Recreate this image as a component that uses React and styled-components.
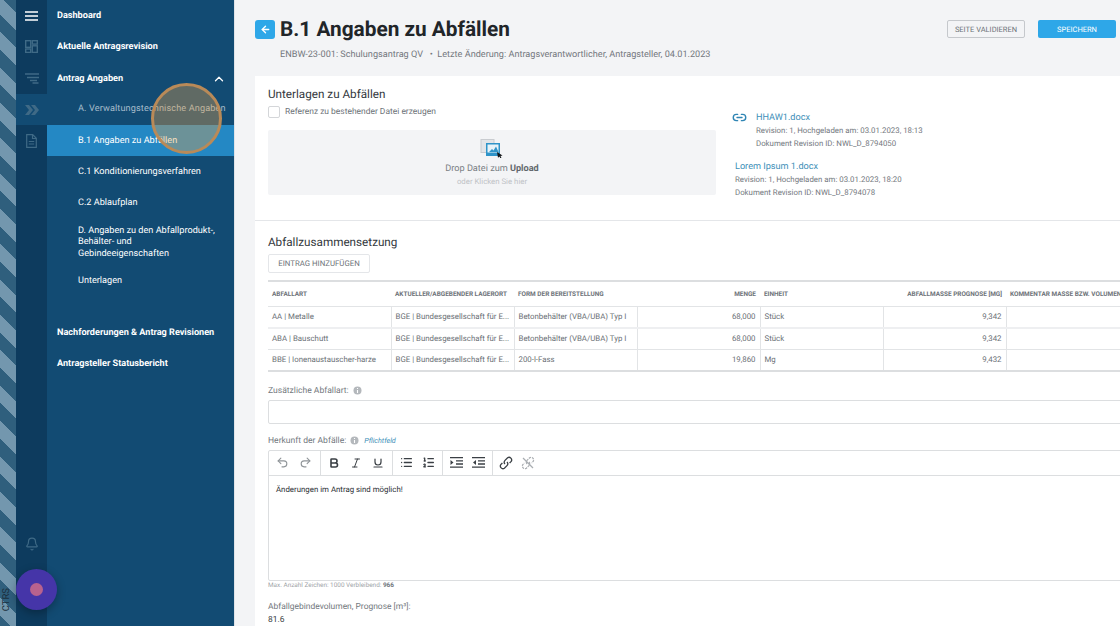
import React from 'react';
import styled, { createGlobalStyle } from 'styled-components';
import { Bell, ChevronUp, ArrowLeft, Link2, Undo2, Redo2, Bold, Italic, Underline, List, ListOrdered } from 'lucide-react';

const Global = createGlobalStyle`
  html, body { margin: 0; padding: 0; height: 100%; overflow: hidden; }
  body { font-family: Roboto, "Liberation Sans", sans-serif; background: #f3f4f6; text-rendering: geometricPrecision; }
  * { box-sizing: border-box; }
`;
const Page = styled.div`display:flex;width:1120px;height:626px;overflow:hidden;position:relative;`;
const Stripes = styled.div`
  width:16px;flex:none;position:relative;
  background: repeating-linear-gradient(45deg,#2f5f7d 0 7.7px,#7397ae 7.7px 20.2px,#2f5f7d 20.2px 25px);
`;
const CtrsLabel = styled.span`
  position:absolute;left:1px;bottom:15px;writing-mode:vertical-rl;transform:rotate(180deg);
  font-size:9.5px;line-height:12px;color:#1c2f3d;
`;
const Rail = styled.nav`width:31px;flex:none;background:#0d3b5e;display:flex;flex-direction:column;`;
const RailCell = styled.div`
  height:${p=>p.$h||31.3}px;display:flex;align-items:center;justify-content:center;flex:none;
  color:${p=>p.$bright?'#fff':'#3f6a86'};
  background:${p=>p.$current?'#124b73':'transparent'};
`;
const RailSpacer = styled.div`flex:1;`;
const Sidebar = styled.nav`width:188px;flex:none;background:#124b73;border-right:1px solid #dfe3e8;display:flex;flex-direction:column;`;
const NavHead = styled.div`
  min-height:31.3px;padding:1px 8px 0 10px;display:flex;align-items:center;justify-content:space-between;
  color:#fff;font-size:9.14px;font-weight:700;line-height:12px;white-space:nowrap;
  margin-top:${p=>p.$gap||0}px;
`;
const NavSub = styled.div`
  min-height:${p=>p.$multi?47:31.3}px;padding:1px 6px 0 31px;display:flex;align-items:center;
  font-size:9.14px;line-height:11.5px;white-space:nowrap;
  letter-spacing:${p=>p.$dim?'.12px':'0'};
  color:${p=>p.$dim?'#a7bdcb':'#fff'};
  background:${p=>p.$active?'#2488c4':'transparent'};
`;
const Highlight = styled.div`
  position:absolute;left:151px;top:83px;width:71px;height:71px;border-radius:50%;
  background:rgba(243,166,71,.35);border:3px solid #b98a58;
`;
const Fab = styled.div`
  position:absolute;left:16px;top:569px;width:41px;height:41px;border-radius:50%;background:#4535a8;
  box-shadow:0 3px 10px rgba(0,0,0,.3);display:flex;align-items:center;justify-content:center;
`;
const FabDot = styled.span`width:13px;height:13px;border-radius:50%;background:#b8628e;`;
const Main = styled.main`flex:1;min-width:0;padding:0 0 0 20px;display:flex;flex-direction:column;`;
const Header = styled.header`height:76px;flex:none;display:flex;flex-direction:column;padding-top:18px;`;
const TitleRow = styled.div`display:flex;align-items:center;height:22px;`;
const BackBtn = styled.div`
  width:20px;height:19px;border-radius:3px;background:#2ea7e8;color:#fff;display:flex;align-items:center;justify-content:center;flex:none;margin-right:5px;
`;
const Title = styled.h1`margin:0;padding-top:1px;font-size:20.8px;line-height:22px;font-weight:700;color:#212529;white-space:nowrap;`;
const Actions = styled.div`margin-left:auto;display:flex;gap:13px;align-items:center;`;
const Ghost = styled.div`
  width:78px;height:18px;border:1px solid #c5c8cc;border-radius:2px;color:#6c7278;font-size:7.5px;
  display:flex;align-items:center;justify-content:center;
`;
const Primary = styled.div`
  width:78px;height:18px;margin-right:4px;background:#2ea7e8;border-radius:2px;color:#fff;font-size:7.5px;display:flex;align-items:center;justify-content:center;
`;
const SubLine = styled.div`margin:7.5px 0 0 25px;font-size:9.14px;line-height:14px;color:#73787e;white-space:pre;`;
const Card = styled.div`background:#fff;flex:1;min-width:0;display:flex;flex-direction:column;overflow:hidden;`;
const Upper = styled.section`height:145px;flex:none;border-bottom:1px solid #e4e6e9;padding:11px 0 0 13px;display:flex;`;
const UpperLeft = styled.div`width:448px;flex:none;`;
const H2 = styled.h2`margin:0;font-size:11.7px;line-height:15px;font-weight:400;color:#33383d;`;
const CheckRow = styled.label`display:flex;align-items:center;gap:5px;margin-top:3px;font-size:8.45px;color:#6d7278;height:14px;`;
const Check = styled.span`width:12px;height:12px;border:1px solid #d4d6d9;border-radius:2px;background:#fff;`;
const Drop = styled.div`
  margin-top:11px;height:65px;background:#f3f4f6;border-radius:2px;display:flex;flex-direction:column;align-items:center;padding-top:9px;
`;
const DropMain = styled.div`font-size:9.14px;line-height:13px;margin-top:5px;color:#7a7f85;b{color:#62676c;}`;
const DropHint = styled.div`font-size:7.8px;line-height:12px;margin-top:0;color:#bfc2c6;`;
const Files = styled.div`margin-left:19px;padding-top:24px;display:flex;flex-direction:column;gap:10px;`;
const FileItem = styled.div`display:flex;gap:9px;margin-left:${p=>p.$icon?'-3px':'0'};`;
const FileLink = styled.div`padding-top:1px;font-size:9.14px;line-height:12px;color:#3e8fb8;`;
const FileMeta = styled.div`font-size:7.85px;line-height:13px;color:#73787e;white-space:nowrap;`;
const IconCol = styled.span`color:#2f85b4;display:flex;height:13px;align-items:center;`;
const Lower = styled.section`padding:14px 0 0 13px;flex:1;min-width:0;overflow:hidden;`;
const AddBtn = styled.div`
  margin-top:4px;width:102px;height:19px;border:1px solid #e4e6e9;border-radius:2px;color:#6d7278;font-size:7.8px;display:flex;align-items:center;justify-content:center;
`;
const Table = styled.table`
  margin-top:7px;border-collapse:collapse;table-layout:fixed;width:861px;
  border-top:2px solid #dcdee0;border-bottom:2px solid #dcdee0;
`;
const Th = styled.th`
  width:123px;height:25px;padding:0 4px;font-size:6.45px;font-weight:700;color:#6d7278;white-space:nowrap;
  text-align:${p=>p.$right?'right':'left'};border-bottom:1px solid #e2e4e6;
`;
const Td = styled.td`
  height:21.6px;padding:0 4px;font-size:7.85px;color:#6a6f75;white-space:nowrap;
  text-align:${p=>p.$right?'right':'left'};
  border-left:${p=>p.$first?'none':'1px solid #e2e4e6'};border-bottom:${p=>p.$thick?'2px solid #eeeff1':'1px solid #e2e4e6'};
`;
const LabelRow = styled.div`display:flex;align-items:center;gap:4px;font-size:8.55px;line-height:12px;color:#73787e;margin-top:${p=>p.$top}px;`;
const Required = styled.span`margin-left:1px;font-size:7.2px;font-style:italic;color:#3e8fb8;`;
const TextInput = styled.div`margin-top:3px;height:24px;width:900px;border:1px solid #dcdee0;border-radius:2px;background:#fff;`;
const Editor = styled.div`margin-top:3px;width:900px;border:1px solid #dcdee0;border-radius:2px;height:131px;display:flex;flex-direction:column;`;
const Toolbar = styled.div`height:25px;flex:none;display:flex;border-bottom:1px solid #dcdee0;`;
const ToolGroup = styled.div`
  display:flex;align-items:center;padding:0 3px 0 2px;color:${p=>p.$muted?'#8f9498':'#3a3f44'};
  border-right:${p=>p.$last?'none':'1px solid #dcdee0'};
`;
const ToolBtn = styled.span`
  width:${p=>p.$w||22}px;height:22px;display:flex;align-items:center;justify-content:center;
  color:${p=>p.$muted?'#a9adb1':'inherit'};
`;
const EditorBody = styled.div`padding:8px 7px;font-size:7.85px;line-height:11px;color:#2a2e33;`;
const Count = styled.div`margin-top:0;font-size:6.4px;line-height:8px;color:#a0a4a8;b{color:#73787e;}`;
const VolLabel = styled.div`margin-top:12px;font-size:8.45px;line-height:12px;color:#73787e;`;
const VolValue = styled.div`margin-top:0;font-size:8.45px;line-height:14px;color:#3a3f44;`;

const rows = [
  ['AA | Metalle','BGE | Bundesgesellschaft für E...','Betonbehälter (VBA/UBA) Typ I','68,000','Stück','9,342'],
  ['ABA | Bauschutt','BGE | Bundesgesellschaft für E...','Betonbehälter (VBA/UBA) Typ I','68,000','Stück','9,342'],
  ['BBE | Ionenaustauscher-harze','BGE | Bundesgesellschaft für E...','200-l-Fass','19,860','Mg','9,432'],
];

const DropIcon = () => (
  <svg width="24" height="19" viewBox="0 0 24 19">
    <rect x="1" y="0.5" width="13" height="13" fill="#e3e5e8" stroke="#c9ccd0"/>
    <rect x="6" y="4" width="14" height="13" fill="#2f94c9"/>
    <rect x="7.5" y="5.5" width="11" height="8" fill="#e8f3f9"/>
    <path d="M9 13l3-3 1.5 1.5 2.5-4 2.5 5.5z" fill="#2f94c9"/>
    <path d="M17 13l5.5 3.5-2 .6 1 2-1 .4-1-2-1.5 1.2z" fill="#15181b"/>
  </svg>
);
const HamburgerIcon = () => (
  <svg width="13" height="10" viewBox="0 0 13 10" fill="none" stroke="currentColor" strokeWidth="1.4">
    <path d="M0 1h13M0 5h13M0 9h13"/>
  </svg>
);
const TilesIcon = () => (
  <svg width="13" height="13" viewBox="0 0 13 13" fill="none" stroke="currentColor" strokeWidth="1.4">
    <rect x=".7" y=".7" width="5" height="6.6"/><rect x="7.3" y=".7" width="5" height="3.4"/>
    <rect x=".7" y="9" width="5" height="3.4"/><rect x="7.3" y="5.8" width="5" height="6.6"/>
  </svg>
);
const FilterIcon = () => (
  <svg width="14" height="11" viewBox="0 0 14 11" fill="none" stroke="currentColor" strokeWidth="1.3">
    <path d="M0 1h14M2 4.5h12M5 7.5h7M7.5 10h6"/>
  </svg>
);
const DoubleChevronIcon = () => (
  <svg width="14" height="10" viewBox="0 0 14 10" fill="currentColor">
    <path d="M0 0h4l4 5-4 5H0l4-5zM6 0h4l4 5-4 5H6l4-5z"/>
  </svg>
);
const DocIcon = () => (
  <svg width="11" height="14" viewBox="0 0 11 14" fill="none" stroke="currentColor" strokeWidth="1.2">
    <path d="M.7.7h6l3.6 3.6v9H.7zM6.5.7v3.8h3.8M2.8 7.5h5.4M2.8 10h5.4"/>
  </svg>
);
const InfoDot = () => (
  <svg width="9" height="9" viewBox="0 0 9 9">
    <circle cx="4.5" cy="4.5" r="4" fill="#b4b8bc"/>
    <path d="M4.5 2v1M4.5 4v3" stroke="#fff" strokeWidth="1.1"/>
  </svg>
);
const IndentIcon = ({out}) => (
  <svg width="13" height="11" viewBox="0 0 13 11" fill="none" stroke="currentColor" strokeWidth="1.3">
    <path d="M0 .7h13M6 3.8h7M6 7h7M0 10.2h13"/>
    <path d={out ? 'M4 3l-3 2.5L4 8z' : 'M0.5 3l3 2.5-3 2.5z'} fill="currentColor" stroke="none"/>
  </svg>
);
const BrokenLinkIcon = () => (
  <svg width="14" height="14" viewBox="0 0 14 14" fill="none" stroke="currentColor" strokeWidth="1.2" strokeDasharray="2.4 .9">
    <path d="M6 8a2.6 2.6 0 0 1 0-3.6l2.6-2.6a2.6 2.6 0 0 1 3.6 3.6L10.6 7"/>
    <path d="M8 6a2.6 2.6 0 0 1 0 3.6l-2.6 2.6a2.6 2.6 0 0 1-3.6-3.6L3.4 7"/>
    <path d="M2 2l10 10" strokeDasharray="none"/>
  </svg>
);
const ChainIcon = () => (
  <svg width="14" height="14" viewBox="0 0 14 14" fill="none" stroke="currentColor" strokeWidth="1.3">
    <path d="M6 8a2.6 2.6 0 0 1 0-3.6l2.6-2.6a2.6 2.6 0 0 1 3.6 3.6L10.6 7"/>
    <path d="M8 6a2.6 2.6 0 0 1 0 3.6l-2.6 2.6a2.6 2.6 0 0 1-3.6-3.6L3.4 7"/>
  </svg>
);

export default function App(){
  return (
    <Page>
      <Global/>
      <Stripes><CtrsLabel>CTRS</CtrsLabel></Stripes>
      <Rail>
        <RailCell $bright><HamburgerIcon/></RailCell>
        <RailCell><TilesIcon/></RailCell>
        <RailCell><FilterIcon/></RailCell>
        <RailCell $current><DoubleChevronIcon/></RailCell>
        <RailCell><DocIcon/></RailCell>
        <RailSpacer/>
        <RailCell $h={52}><Bell size={14}/></RailCell>
        <RailCell $h={56}/>
      </Rail>
      <Sidebar>
        <NavHead>Dashboard</NavHead>
        <NavHead>Aktuelle Antragsrevision</NavHead>
        <NavHead>Antrag Angaben<ChevronUp size={14} strokeWidth={2.2}/></NavHead>
        <NavSub $dim>A. Verwaltungstechnische Angaben</NavSub>
        <NavSub $active>B.1 Angaben zu Abfällen</NavSub>
        <NavSub>C.1 Konditionierungsverfahren</NavSub>
        <NavSub>C.2 Ablaufplan</NavSub>
        <NavSub $multi><span>D. Angaben zu den Abfallprodukt-,<br/>Behälter- und<br/>Gebindeeigenschaften</span></NavSub>
        <NavSub>Unterlagen</NavSub>
        <NavHead $gap={19.5}>Nachforderungen &amp; Antrag Revisionen</NavHead>
        <NavHead>Antragsteller Statusbericht</NavHead>
      </Sidebar>
      <Main>
        <Header>
          <TitleRow>
            <BackBtn><ArrowLeft size={11} strokeWidth={3}/></BackBtn>
            <Title>B.1 Angaben zu Abfällen</Title>
            <Actions><Ghost>SEITE VALIDIEREN</Ghost><Primary>SPEICHERN</Primary></Actions>
          </TitleRow>
          <SubLine>{'ENBW-23-001: Schulungsantrag QV   •  Letzte Änderung: Antragsverantwortlicher, Antragsteller, 04.01.2023'}</SubLine>
        </Header>
        <Card>
          <Upper>
            <UpperLeft>
              <H2>Unterlagen zu Abfällen</H2>
              <CheckRow><Check/>Referenz zu bestehender Datei erzeugen</CheckRow>
              <Drop>
                <DropIcon/>
                <DropMain>Drop Datei zum <b>Upload</b></DropMain>
                <DropHint>oder Klicken Sie hier</DropHint>
              </Drop>
            </UpperLeft>
            <Files>
              <FileItem $icon>
                <IconCol><Link2 size={15} strokeWidth={2.2}/></IconCol>
                <div>
                  <FileLink>HHAW1.docx</FileLink>
                  <FileMeta>Revision: 1, Hochgeladen am: 03.01.2023, 18:13</FileMeta>
                  <FileMeta>Dokument Revision ID: NWL_D_8794050</FileMeta>
                </div>
              </FileItem>
              <FileItem>
                <div>
                  <FileLink>Lorem Ipsum 1.docx</FileLink>
                  <FileMeta>Revision: 1, Hochgeladen am: 03.01.2023, 18:20</FileMeta>
                  <FileMeta>Dokument Revision ID: NWL_D_8794078</FileMeta>
                </div>
              </FileItem>
            </Files>
          </Upper>
          <Lower>
            <H2>Abfallzusammensetzung</H2>
            <AddBtn>EINTRAG HINZUFÜGEN</AddBtn>
            <Table>
              <thead>
                <tr>
                  <Th>ABFALLART</Th>
                  <Th>AKTUELLER/ABGEBENDER LAGERORT</Th>
                  <Th>FORM DER BEREITSTELLUNG</Th>
                  <Th $right>MENGE</Th>
                  <Th>EINHEIT</Th>
                  <Th $right>ABFALLMASSE PROGNOSE [MG]</Th>
                  <Th>KOMMENTAR MASSE BZW. VOLUMEN</Th>
                </tr>
              </thead>
              <tbody>
                {rows.map((r,i)=>(
                  <tr key={r[0]}>
                    <Td $first $thick={i===0}>{r[0]}</Td>
                    <Td $thick={i===0}>{r[1]}</Td>
                    <Td $thick={i===0}>{r[2]}</Td>
                    <Td $right $thick={i===0}>{r[3]}</Td>
                    <Td $thick={i===0}>{r[4]}</Td>
                    <Td $right $thick={i===0}>{r[5]}</Td>
                    <Td $thick={i===0}/>
                  </tr>
                ))}
              </tbody>
            </Table>
            <LabelRow $top={13}>Zusätzliche Abfallart:<InfoDot/></LabelRow>
            <TextInput/>
            <LabelRow $top={11}>Herkunft der Abfälle:<InfoDot/><Required>Pflichtfeld</Required></LabelRow>
            <Editor>
              <Toolbar>
                <ToolGroup $muted><ToolBtn $w={23}><Undo2 size={13}/></ToolBtn><ToolBtn $w={23}><Redo2 size={13}/></ToolBtn></ToolGroup>
                <ToolGroup><ToolBtn><Bold size={12} strokeWidth={3.2}/></ToolBtn><ToolBtn><Italic size={12}/></ToolBtn><ToolBtn><Underline size={12} strokeWidth={2.4}/></ToolBtn></ToolGroup>
                <ToolGroup><ToolBtn><List size={13} strokeWidth={2.4}/></ToolBtn><ToolBtn><ListOrdered size={13} strokeWidth={2.4}/></ToolBtn></ToolGroup>
                <ToolGroup><ToolBtn><IndentIcon/></ToolBtn><ToolBtn><IndentIcon out/></ToolBtn></ToolGroup>
                <ToolGroup $last><ToolBtn><ChainIcon/></ToolBtn><ToolBtn $muted><BrokenLinkIcon/></ToolBtn></ToolGroup>
              </Toolbar>
              <EditorBody>Änderungen im Antrag sind möglich!</EditorBody>
            </Editor>
            <Count>Max. Anzahl Zeichen: 1000 Verbleibend: <b>966</b></Count>
            <VolLabel>Abfallgebindevolumen, Prognose [m³]:</VolLabel>
            <VolValue>81.6</VolValue>
          </Lower>
        </Card>
      </Main>
      <Highlight/>
      <Fab><FabDot/></Fab>
    </Page>
  );
}
